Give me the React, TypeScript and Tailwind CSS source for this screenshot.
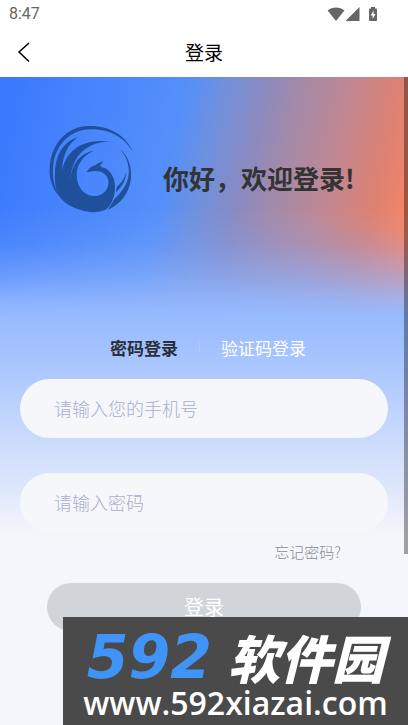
import React, { useState } from 'react';

type LoginMode = 'password' | 'code';

const StatusBar: React.FC = () => (
    <div className="flex h-7 items-center justify-between pl-[9px] pr-[30px] text-[#666666]">
        <span className="font-['Roboto',sans-serif] text-base">8:47</span>
        <div className="flex items-center">
            <svg width="18" height="14" viewBox="0 0 18 14" fill="currentColor" aria-hidden="true">
                <path d="M9 14L0.6 3.6C5 -0.4 13 -0.4 17.4 3.6Z" />
            </svg>
            <svg width="15" height="14" viewBox="0 0 15 14" fill="currentColor" aria-hidden="true">
                <path d="M14.5 0V14H0.5Z" />
            </svg>
            <svg className="ml-2" width="10" height="14" viewBox="0 0 10 14" aria-hidden="true">
                <path d="M3 0H7V1.5H8.2Q9 1.5 9 2.3V13.2Q9 14 8.2 14H1.8Q1 14 1 13.2V2.3Q1 1.5 1.8 1.5H3Z" fill="currentColor" />
                <path d="M5.6 3.5L2.6 8.4H4.6V12L7.5 7H5.6Z" fill="white" />
            </svg>
        </div>
    </div>
);

const NavBar: React.FC = () => (
    <header className="relative flex h-12 items-center justify-center">
        <button type="button" aria-label="返回" className="absolute left-4 flex size-6 items-center">
            <svg width="16" height="22" viewBox="0 0 16 22" fill="none" stroke="black" strokeWidth="1.5" aria-hidden="true">
                <path d="M13 2L3 11L13 20.5" />
            </svg>
        </button>
        <h1 className="text-[19px] leading-6 text-black">登录</h1>
    </header>
);

const PhoenixLogo: React.FC = () => (
    <svg width="85" height="88" viewBox="28 30 255 264" fill="#1f509c" aria-hidden="true">
        {/* outer ring, thinning out on the right */}
        <path d="M57 243C38 220 28 190 30 158C33 88 82 33 148 33C211 32 260 62 279 111C256 68 210 41 151 43C91 44 45 91 40 156C38 186 43 218 57 243Z" />
        {/* body and the three wing feathers */}
        <path d="M50 229C46 211 45 190 46 170C49 119 71 79 116 66C86 86 69 118 67 166C80 111 119 71 211 79C144 82 99 118 91 194C97 145 121 114 163 107C131 120 109 150 111 183C113 219 134 243 165 243C191 243 209 221 206 197C203 177 185 167 165 168C157 168 150 171 140 171C149 161 156 153 167 151C174 143 183 145 190 136C189 144 184 149 179 152L188 154C181 157 184 156 192 158C213 165 225 188 226 213C227 246 215 269 198 284C177 293 149 294 125 286C88 276 60 254 50 229Z" />
        {/* tail on the right */}
        <path d="M240 102C264 121 276 151 274 186C272 230 243 269 204 284C212 272 219 261 225 251C253 226 271 196 267 160C265 138 256 119 240 102Z" />
        <path d="M260 172C255 190 243 207 231 216L229 232C244 219 258 198 260 172Z" />
    </svg>
);

const Watermark: React.FC = () => (
    <aside className="absolute bottom-0 left-[63px] right-0 flex h-[108px] flex-col items-center overflow-hidden bg-[#4a4a4a] pt-4">
        <p className="flex h-12 shrink-0 items-center gap-4 whitespace-nowrap font-black italic">
            <span className="font-['DejaVu_Sans',sans-serif] text-[60px] leading-12 text-[#4094f8]">592</span>
            <span className="text-[52px] leading-11 text-white">软件园</span>
        </p>
        <p className="mt-1 whitespace-nowrap font-['Open_Sans',sans-serif] text-[32px] font-semibold leading-9 text-white">
            www.592xiazai.com
        </p>
    </aside>
);

const inputClass =
    'block h-[59px] w-full rounded-full bg-[#f5f7fb] px-[34px] pb-0.5 text-lg font-light text-[#333333] outline-none placeholder:text-[#a8afd0]';

const LoginForm: React.FC = () => {
    const [mode, setMode] = useState<LoginMode>('password');
    const [phone, setPhone] = useState('');
    const [secret, setSecret] = useState('');
    const secretLabel = mode === 'password' ? '请输入密码' : '请输入验证码';

    const tabClass = (tab: LoginMode) => (mode === tab ? 'font-bold text-[#2b2f38]' : 'text-white');

    return (
        <form onSubmit={(e) => e.preventDefault()}>
            <div className="flex items-center justify-center gap-[21px] pl-2 text-[17px] leading-6">
                <button type="button" className={tabClass('password')} onClick={() => setMode('password')}>
                    密码登录
                </button>
                <span className="h-3 w-px bg-[#b9c8ea]" />
                <button type="button" className={tabClass('code')} onClick={() => setMode('code')}>
                    验证码登录
                </button>
            </div>
            <div className="mt-[19px] px-5">
                <input
                    type="tel"
                    aria-label="手机号"
                    placeholder="请输入您的手机号"
                    className={inputClass}
                    value={phone}
                    onChange={(e) => setPhone(e.target.value)}
                />
                <input
                    type={mode === 'password' ? 'password' : 'text'}
                    aria-label={secretLabel}
                    placeholder={secretLabel}
                    className={`${inputClass} mt-[35px]`}
                    value={secret}
                    onChange={(e) => setSecret(e.target.value)}
                />
            </div>
            <div className="mt-2 flex justify-end pr-[67px]">
                <a href="#forgot" className="text-[15px] font-light leading-6 text-[#888b93]">
                    忘记密码?
                </a>
            </div>
            <div className="mt-[19px] px-[47px]">
                <button type="submit" className="h-12 w-full rounded-full bg-[#d1d4d9] text-xl text-white">
                    登录
                </button>
            </div>
        </form>
    );
};

const App: React.FC = () => (
    <div className="relative flex min-h-screen flex-col bg-white font-['Noto_Sans_CJK_SC',sans-serif]">
        <StatusBar />
        <NavBar />
        <main className="relative mt-px flex-1 bg-[#f5f6fb] bg-[linear-gradient(180deg,rgba(152,187,255,0)_130px,rgba(152,187,255,0.15)_168px,rgba(152,187,255,0.48)_200px,rgba(152,187,255,0.84)_225px,#98bbff_240px,#a2c1ff_270px,#cfdefc_373px,#dde7fb_410px,#f5f6fb_458px),radial-gradient(ellipse_280px_100px_at_62%_100%,rgba(105,145,240,0.6),rgba(105,145,240,0)),linear-gradient(102deg,#3a78ff_0%,#5590fa_41%,#6f90dd_49%,#8b8ac0_58%,#a48aa8_66%,#bf8794_76%,#dc8173_87%,#ff8560_98%)] bg-[length:100%_100%,100%_240px,100%_240px] bg-no-repeat pb-20">
            <div className="flex items-center gap-[29px] pb-[123px] pl-[49px] pt-12">
                <PhoenixLogo />
                <h2 className="whitespace-nowrap pt-[18px] text-[26px] font-bold leading-8 text-[#333333]">你好，欢迎登录!</h2>
            </div>
            <LoginForm />
            <span className="absolute right-0 top-0 h-[477px] w-1 bg-black/35" />
        </main>
        <Watermark />
    </div>
);

export default App;
